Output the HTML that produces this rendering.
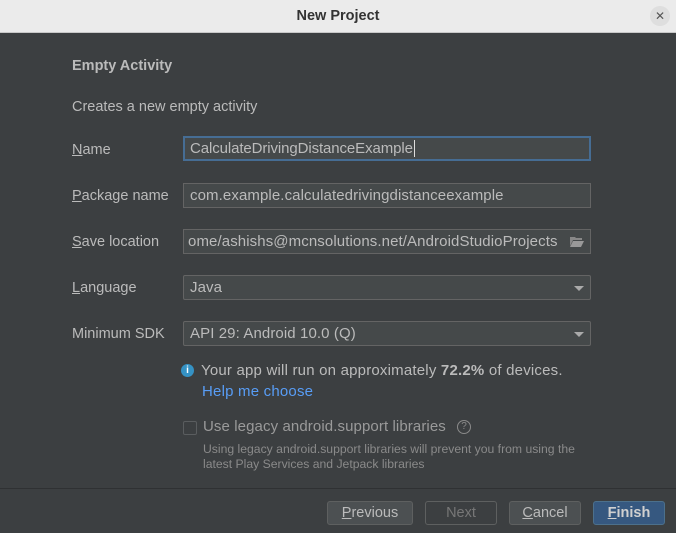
<!DOCTYPE html>
<html><head><meta charset="utf-8"><style>
*{box-sizing:border-box;margin:0;padding:0}
body{width:676px;height:533px;background:#3c3f41;font-family:"Liberation Sans",sans-serif;color:#bbbbbb;position:relative;overflow:hidden}
.title{position:absolute;left:0;top:0;width:676px;height:33px;background:#ebebeb;border-bottom:1px solid #c8c8c8;text-align:center;font-weight:bold;font-size:14.5px;line-height:33px;color:#333}
.close{position:absolute;right:6px;top:6px;width:20px;height:20px;border-radius:10px;background:#dedede;color:#555;font-size:12px;line-height:20px;text-align:center;font-weight:normal}
.abs{position:absolute;white-space:nowrap}
.lbl{position:absolute;left:72px;font-size:14.5px;color:#bbbbbb}
.in{position:absolute;left:183px;width:408px;height:25px;background:#45494a;border:1px solid #646464;font-size:15px;letter-spacing:0.1px;line-height:23px;padding-left:6px;color:#bbbbbb;overflow:hidden;white-space:nowrap}
.arrow{position:absolute;right:6px;top:10px;width:0;height:0;border-left:5px solid transparent;border-right:5px solid transparent;border-top:5px solid #aaa}
.btn{position:absolute;top:501px;height:24px;border:1px solid #5e6060;border-radius:3px;background:#4c5052;font-size:14.5px;line-height:22px;text-align:center;color:#bbbbbb}
</style></head><body>
<div class="title">New Project<div class="close">✕</div></div>
<div class="abs" style="left:72px;top:58px;font-size:14.5px;font-weight:bold;color:#bbbbbb">Empty Activity</div>
<div class="abs" style="left:72px;top:99px;font-size:14.5px">Creates a new empty activity</div>

<div class="lbl" style="top:142px"><u>N</u>ame</div>
<div class="in" style="top:136px;border:2px solid #466d94;line-height:21px;padding-left:5px;letter-spacing:-0.1px">CalculateDrivingDistanceExample<span style="border-left:1px solid #ddd;margin-left:1px"></span></div>

<div class="lbl" style="top:188px"><u>P</u>ackage name</div>
<div class="in" style="top:183px">com.example.calculatedrivingdistanceexample</div>

<div class="lbl" style="top:234px"><u>S</u>ave location</div>
<div class="in" style="top:229px;padding-left:4px">ome/ashishs@mcnsolutions.net/AndroidStudioProjects
<svg style="position:absolute;right:6px;top:6px;background:#45494a" width="14" height="11" viewBox="0 0 14 11"><path d="M0 1h5l1 1h6v2H3L0 10z" fill="#888"/><path d="M3 5h11l-3 6H0z" fill="#999"/></svg></div>

<div class="lbl" style="top:280px"><u>L</u>anguage</div>
<div class="in" style="top:275px;border-radius:2px">Java<div class="arrow"></div></div>

<div class="lbl" style="top:326px">Minimum SDK</div>
<div class="in" style="top:321px;border-radius:2px">API 29: Android 10.0 (Q)<div class="arrow"></div></div>

<div class="abs" style="left:181px;top:364px;width:13px;height:13px;border-radius:7px;background:#3592c4;color:#fff;font-size:10px;font-weight:bold;text-align:center;line-height:13px">i</div>
<div class="abs" style="left:201px;top:362px;font-size:15px;letter-spacing:0.2px">Your app will run on approximately <b>72.2%</b> of devices.</div>
<div class="abs" style="left:202px;top:383px;font-size:15px;letter-spacing:0.2px;color:#589df6">Help me choose</div>

<div class="abs" style="left:183px;top:421px;width:14px;height:14px;border:1px solid #5a5d5f;border-radius:2px"></div>
<div class="abs" style="left:203px;top:418px;font-size:15px;letter-spacing:0.1px;color:#9a9a9a">Use legacy android.support libraries</div>
<div class="abs" style="left:457px;top:420px;width:14px;height:14px;border:1px solid #8a8a8a;border-radius:7px;font-size:10px;line-height:12px;text-align:center;color:#8a8a8a">?</div>
<div class="abs" style="left:203px;top:442px;font-size:12.2px;color:#8a8a8a;line-height:15px">Using legacy android.support libraries will prevent you from using the<br>latest Play Services and Jetpack libraries</div>

<div class="abs" style="left:0;top:488px;width:676px;height:1px;background:#2f3133"></div>

<div class="btn" style="left:327px;width:86px"><u>P</u>revious</div>
<div class="btn" style="left:425px;width:72px;background:#3c3f41;color:#777">Next</div>
<div class="btn" style="left:509px;width:72px"><u>C</u>ancel</div>
<div class="btn" style="left:593px;width:72px;background:#365880;border-color:#4c708c;font-weight:bold;color:#d0d0d0"><u>F</u>inish</div>
</body></html>
